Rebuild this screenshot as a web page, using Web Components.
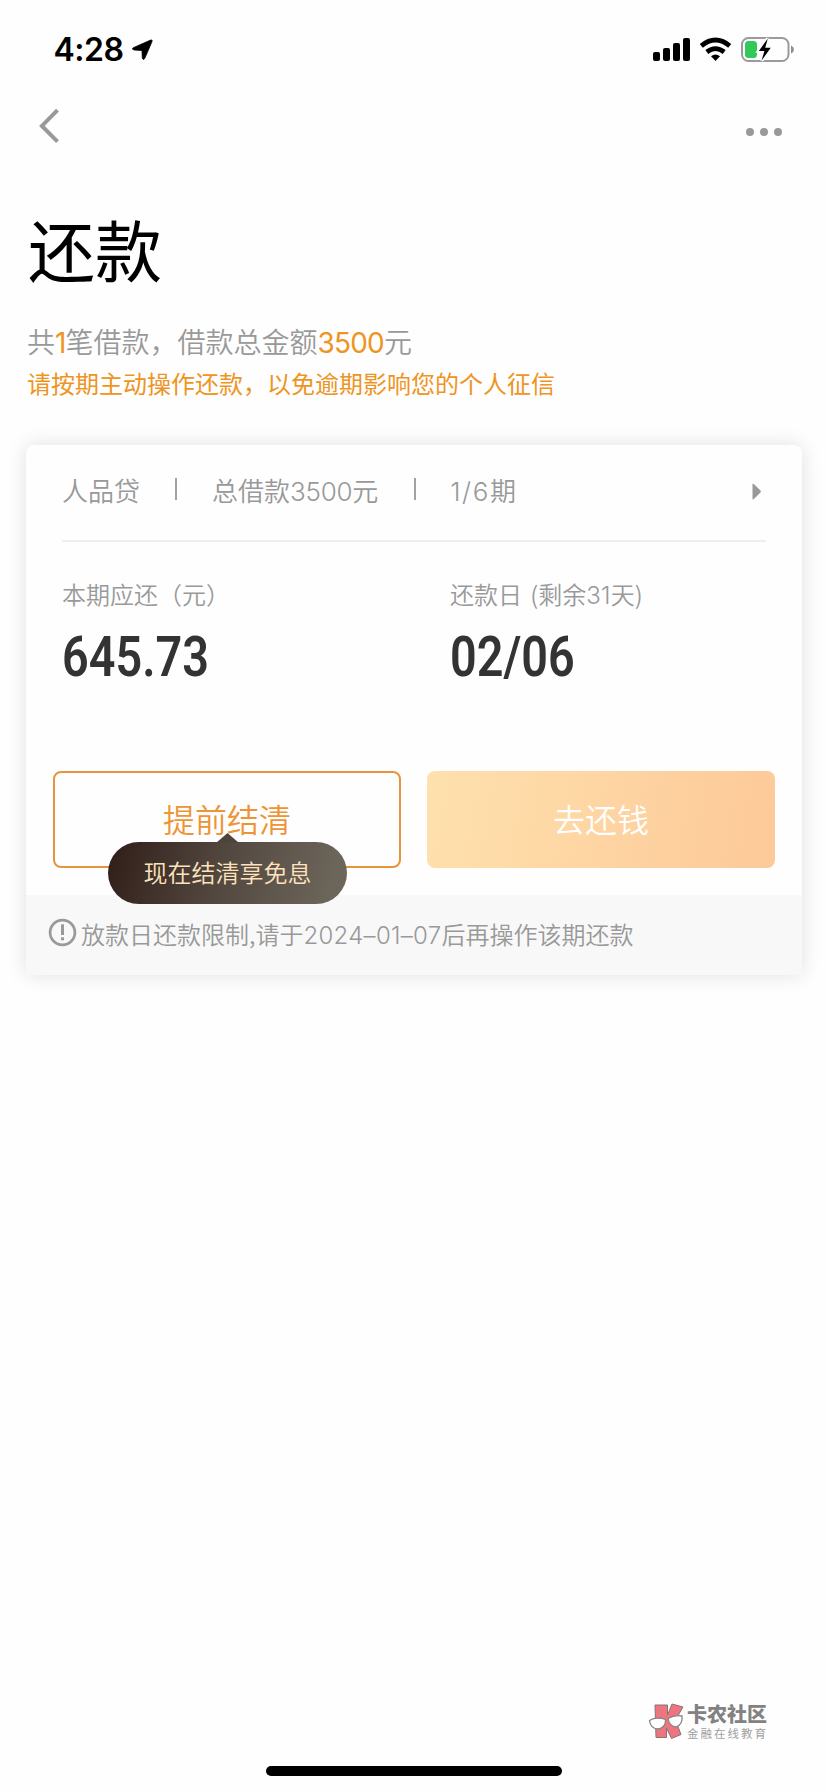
<!DOCTYPE html>
<html lang="zh-CN">
<head>
<meta charset="utf-8">
<title>还款</title>
<style>
html,body{margin:0;background:#fefefe}
body{width:828px;height:1792px;overflow:hidden;font-family:"Noto Sans CJK SC","PingFang SC",sans-serif;font-weight:350}
</style>
</head>
<body>
<repay-page></repay-page>
<script>
const define=(name,css,html)=>customElements.define(name,class extends HTMLElement{
  constructor(){
    super();
    this.attachShadow({mode:'open'}).innerHTML=`<style>*{box-sizing:border-box}${css}</style>${html}`;
  }
});

/* Latin digits inside Chinese copy */
define('num-text',`:host{display:inline;font-family:Inter,sans-serif;line-height:1;letter-spacing:var(--num-track,-.03em)}`,`<slot></slot>`);

define('status-bar',`
:host{display:flex;height:98px;padding:0 33px 0 54px;justify-content:space-between;box-sizing:border-box}
.l,.r{display:flex;align-items:flex-start}
.t{font:600 32px/40px Inter,sans-serif;letter-spacing:-.5px;margin:30px 0 0 -.5px;width:70.5px;white-space:nowrap}
.l svg{margin:38px 0 0 7px}
.r svg{display:block;margin-top:36px}
`,`<div class="l"><span class="t">4:28</span>
<svg width="24" height="24" viewBox="0 0 24 24"><path d="M2.2 9.8 19.6 2.1Q21.8 1.3 21 3.6L13.8 20.3Q12.4 22.800 11.300 20.200L11 12.500 3.200 12Q.2 11.300 2.200 9.800Z" stroke="#000" stroke-width=".8"/></svg></div>
<div class="r">
<svg width="142" height="28" viewBox="653 36 142 28">
<rect x="653" y="52" width="7" height="9" rx="2"/><rect x="663" y="48" width="7" height="13" rx="2"/><rect x="673" y="43" width="7" height="18" rx="2"/><rect x="683" y="38" width="7" height="23" rx="2"/>
<g fill="none" stroke="#000" stroke-width="4.800"><path d="M701.300 45.800Q715.500 34.200 729.700 45.800"/><path d="M706.800 52Q715.500 45.200 724.200 52"/></g>
<path d="M711 56.300Q715.500 52.800 720 56.300L715.500 61Z"/>
<rect x="742" y="38" width="46.500" height="23" rx="6.500" fill="none" stroke="#9b9b9f" stroke-width="2"/>
<path d="M791 45.500Q794 46.800 794 49.500 794 52.200 791 53.500Z" fill="#8e8e92"/>
<rect x="745" y="41" width="12" height="17" rx="3.500" fill="#34c759"/>
<path d="M767.800 38.600 758.800 51H764.400L761.600 60.600 770.800 47.800H765.200Z" stroke="#fefefe" stroke-width="3.500"/>
<path d="M767.800 38.600 758.800 51H764.400L761.600 60.600 770.800 47.800H765.200Z"/>
</svg></div>`);

define('nav-bar',`
:host{display:flex;height:98px;padding:10px 46px 0 39px;justify-content:space-between;align-items:flex-start}
svg{display:block}.d{margin-top:19px}
`,`<svg width="22" height="36" viewBox="0 0 22 36"><path d="M18.500 2.200 2.900 17.900 18.500 33.600" fill="none" stroke="#999" stroke-width="4"/></svg>
<svg class="d" width="36" height="10" viewBox="0 0 36 10" fill="#999"><circle cx="4" cy="5" r="4"/><circle cx="18" cy="5" r="4"/><circle cx="32" cy="5" r="4"/></svg>`);

define('page-head',`
:host{display:block;padding:0 27px;height:249px}
h1{margin:0;padding:5px 0 0 1px;font-size:67px;line-height:94px;font-weight:400;color:#000}
p{margin:0;white-space:nowrap}
.s{margin-top:26px;font-size:28px;line-height:40px;color:#999}
.s num-text{color:#ee9422;font-weight:400}
.w{margin-top:4px;font-size:24px;line-height:36px;font-weight:400;color:#ee9422}
`,`<h1><slot name="title"></slot></h1>
<p class="s">共<num-text>1</num-text>笔借款，借款总金额<num-text>3500</num-text>元</p>
<p class="w"><slot name="warning"></slot></p>`);

define('loan-summary',`
:host{display:flex;align-items:center;height:97px;margin:0 36px;border-bottom:2px solid #eee;color:#999;font-size:26px;white-space:nowrap;box-sizing:border-box;padding-bottom:3px}
::slotted(span){margin-top:-4px}
i{width:2px;height:22px;background:#a2a2a2;margin:0 35px 4px}
i+slot+i{margin-left:36px;margin-right:34px}
svg{margin-left:auto;margin-right:4px}
`,`<slot name="name"></slot><i></i><slot name="total"></slot><i></i><slot name="term"></slot>
<svg width="10" height="17" viewBox="0 0 10 17"><path d="M.5 1Q.8 0 1.800 1L8.500 7.500Q9.200 8.500 8.500 9.500L1.800 16Q.8 17 .5 16Z" fill="#999"/></svg>`);

define('stat-item',`
:host{display:block;white-space:nowrap;--num-track:.01em}
.l{font-size:24px;line-height:36px;height:36px;color:#999;word-spacing:3px}
.v{display:block;width:max-content;font:600 56px/60px Roboto,sans-serif;color:#333;margin-top:15px;transform:scaleX(.835);transform-origin:0 50%}
`,`<div class="l"><slot name="label"></slot></div><span class="v"><slot></slot></span>`);

define('action-button',`
:host{display:flex;width:348px;height:97px;border-radius:8px;align-items:center;justify-content:center;font-size:32px;line-height:48px;box-sizing:border-box;padding-bottom:4px;position:relative}
:host([kind=outline]){border:2px solid #e7953d;color:#ee9434}
:host([kind=solid]){background:linear-gradient(100deg,#fee1ad,#fdc998);color:#fff}
`,`<slot></slot><slot name="tip"></slot>`);

define('tip-bubble',`
:host{position:absolute;left:53px;top:69px;width:239px;height:62px;border-radius:31px;background:linear-gradient(105deg,#32201a 3%,#51463e 45%,#6c655a 92%);color:#fee2bd;font-size:24px;line-height:60px;text-align:center;white-space:nowrap}
svg{position:absolute;left:108px;top:-9px}
`,`<svg width="23" height="10"><path d="M0 10 11.500 0 23 10Z" fill="#4e443c"/></svg><slot></slot>`);

define('notice-bar',`
:host{display:flex;align-items:center;height:80px;background:#f8f8f8;padding-left:22px;color:#999;font-size:24px;white-space:nowrap;box-sizing:border-box;border-radius:0 0 2px 2px;--num-track:.012em}
svg{margin:-5px 4px 0 0}
span{margin-top:-4px}
`,`<svg width="29" height="29" viewBox="0 0 29 29"><circle cx="14.500" cy="14.500" r="12.400" fill="none" stroke="#999" stroke-width="2.700"/><path d="M14.500 6.300V17" stroke="#999" stroke-width="3"/><rect x="13" y="19.300" width="3" height="3" fill="#999"/></svg><span><slot></slot></span>`);

define('loan-card',`
:host{display:block;margin:0 26px;width:776px;height:530px;background:#fefefe;border-radius:8px 8px 2px 2px;box-shadow:0 0 20px rgba(0,0,0,.12)}
.stats{display:grid;grid-template-columns:388px 1fr;padding:34px 0 0 36px;height:229px;box-sizing:border-box}
.actions{display:flex;gap:26px;padding-left:27px;height:124px}
`,`<slot name="summary"></slot><div class="stats"><slot name="stats"></slot></div><div class="actions"><slot name="actions"></slot></div><slot name="notice"></slot>`);

define('brand-mark',`
:host{display:flex;height:44px;margin:724px 0 0 646px}
.n{font-size:20px;line-height:24px;font-weight:900;color:#828282}
.s{font-size:11.500px;line-height:14px;letter-spacing:2px;font-weight:400;color:#a0a0a0}
.x{margin:3px 0 0 -1px;white-space:nowrap}
`,`<svg width="42" height="44" viewBox="0 0 42 44">
<g fill="#ec7580" stroke="#8a7375" stroke-width="1"><path d="M9 6H21.500V16L26 5 37 8 29.500 21 35 35.500 25.500 39.500 20.500 29V38.500H10Z"/></g>
<g fill="#fff" stroke="#858585" stroke-width="1.300"><path d="M3.500 21.500Q10 17.500 19.500 20.500 20 28.500 12.500 30 4.500 30 3.500 21.500Z"/><path d="M22 19.500Q29 15.500 36 17 37 25.500 30 28 23.500 27.500 22 19.500Z"/></g></svg>
<div class="x"><div class="n">卡农社区</div><div class="s">金融在线教育</div></div>`);

define('home-indicator',`:host{display:block;width:296px;height:10px;border-radius:5px;background:#000;margin:23px auto 0}`,``);

define('repay-page',`
:host{display:block;width:828px;height:1792px;background:#fefefe}
`,`<status-bar></status-bar><nav-bar></nav-bar>
<page-head><span slot="title">还款</span><span slot="warning">请按期主动操作还款，以免逾期影响您的个人征信</span></page-head>
<loan-card>
<loan-summary slot="summary"><span slot="name">人品贷</span><span slot="total">总借款<num-text style="--num-track:-.01em">3500</num-text>元</span><span slot="term"><num-text style="--num-track:.06em">1/6</num-text>期</span></loan-summary>
<stat-item slot="stats"><span slot="label">本期应还（元）</span>645.73</stat-item>
<stat-item slot="stats"><span slot="label">还款日 (剩余<num-text>31</num-text>天)</span>02/06</stat-item>
<action-button slot="actions" kind="outline">提前结清<tip-bubble slot="tip">现在结清享免息</tip-bubble></action-button>
<action-button slot="actions" kind="solid">去还钱</action-button>
<notice-bar slot="notice">放款日还款限制,请于<num-text>2024–01–07</num-text>后再操作该期还款</notice-bar>
</loan-card>
<brand-mark></brand-mark><home-indicator></home-indicator>`);
</script>
</body>
</html>
